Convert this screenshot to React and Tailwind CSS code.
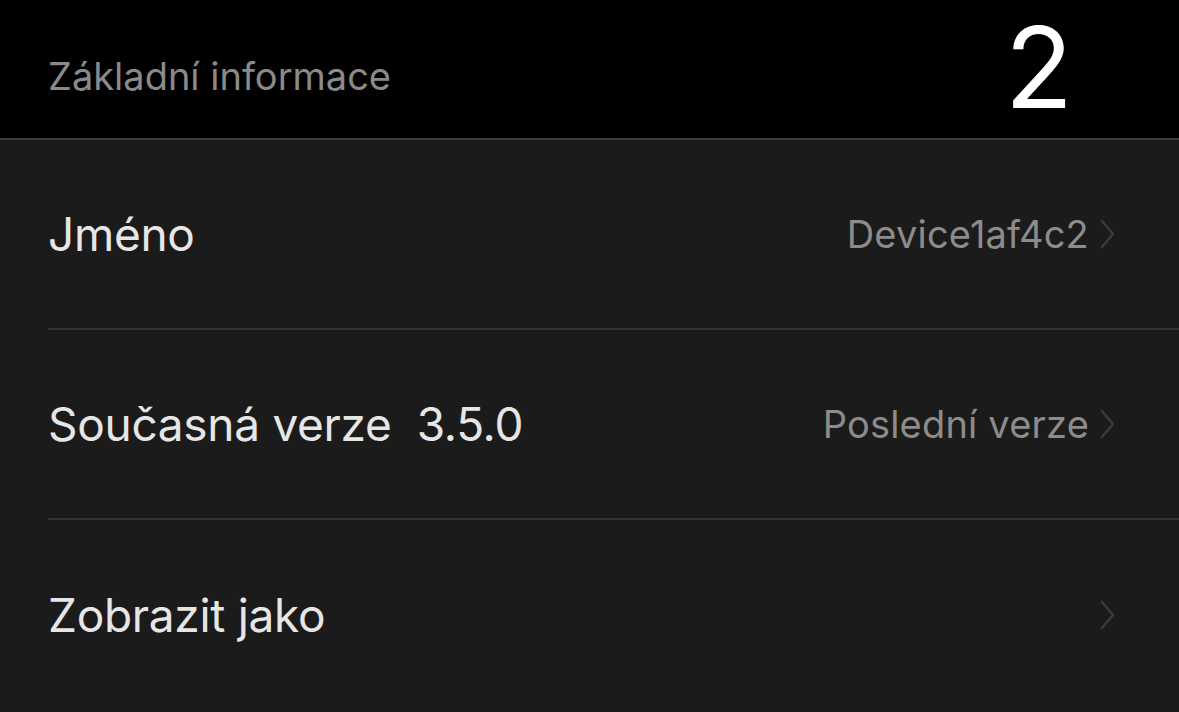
const ROWS = [
  { label: 'Jméno', value: 'Device1af4c2' },
  { label: 'Současná verze  3.5.0', value: 'Poslední verze' },
  { label: 'Zobrazit jako', value: '' },
];

// thin iOS-style disclosure chevron
function Chevron() {
  return (
    <svg width="18" height="30" viewBox="0 0 18 30" fill="none" className="shrink-0">
      <path d="M3 2 L14 15 L3 28" stroke="#3b3b3b" strokeWidth="2.4" strokeLinecap="round" strokeLinejoin="round" />
    </svg>
  );
}

function Row({ label, value, last }) {
  return (
    <div className="pl-[48px]">
      <div className={`h-[190px] flex items-center justify-between pr-[62px] ${last ? '' : 'border-b-2 border-[#333333]'}`}>
        <span className="text-[46px] text-[#e6e6e6] whitespace-pre tracking-[-0.3px]">{label}</span>
        <div className="flex items-center gap-[10px]">
          {value && <span className="text-[38px] text-[#8c8c8c] tracking-[0.2px]">{value}</span>}
          <Chevron />
        </div>
      </div>
    </div>
  );
}

export default function App() {
  return (
    <div className="w-[1179px] h-[712px] overflow-hidden bg-[#1b1b1b] font-['Inter',sans-serif]">
      <div className="h-[140px] bg-black border-b-2 border-[#3a3a3a] flex items-center justify-between pl-[48px] pr-[106px]">
        <span className="mt-[14px] text-[38px] text-[#8a8a8a]">Základní informace</span>
        <span className="self-start text-[112px] leading-[1.2] text-white">2</span>
      </div>
      {ROWS.map((r, i) => (
        <Row key={i} {...r} last={i === ROWS.length - 1} />
      ))}
    </div>
  );
}
